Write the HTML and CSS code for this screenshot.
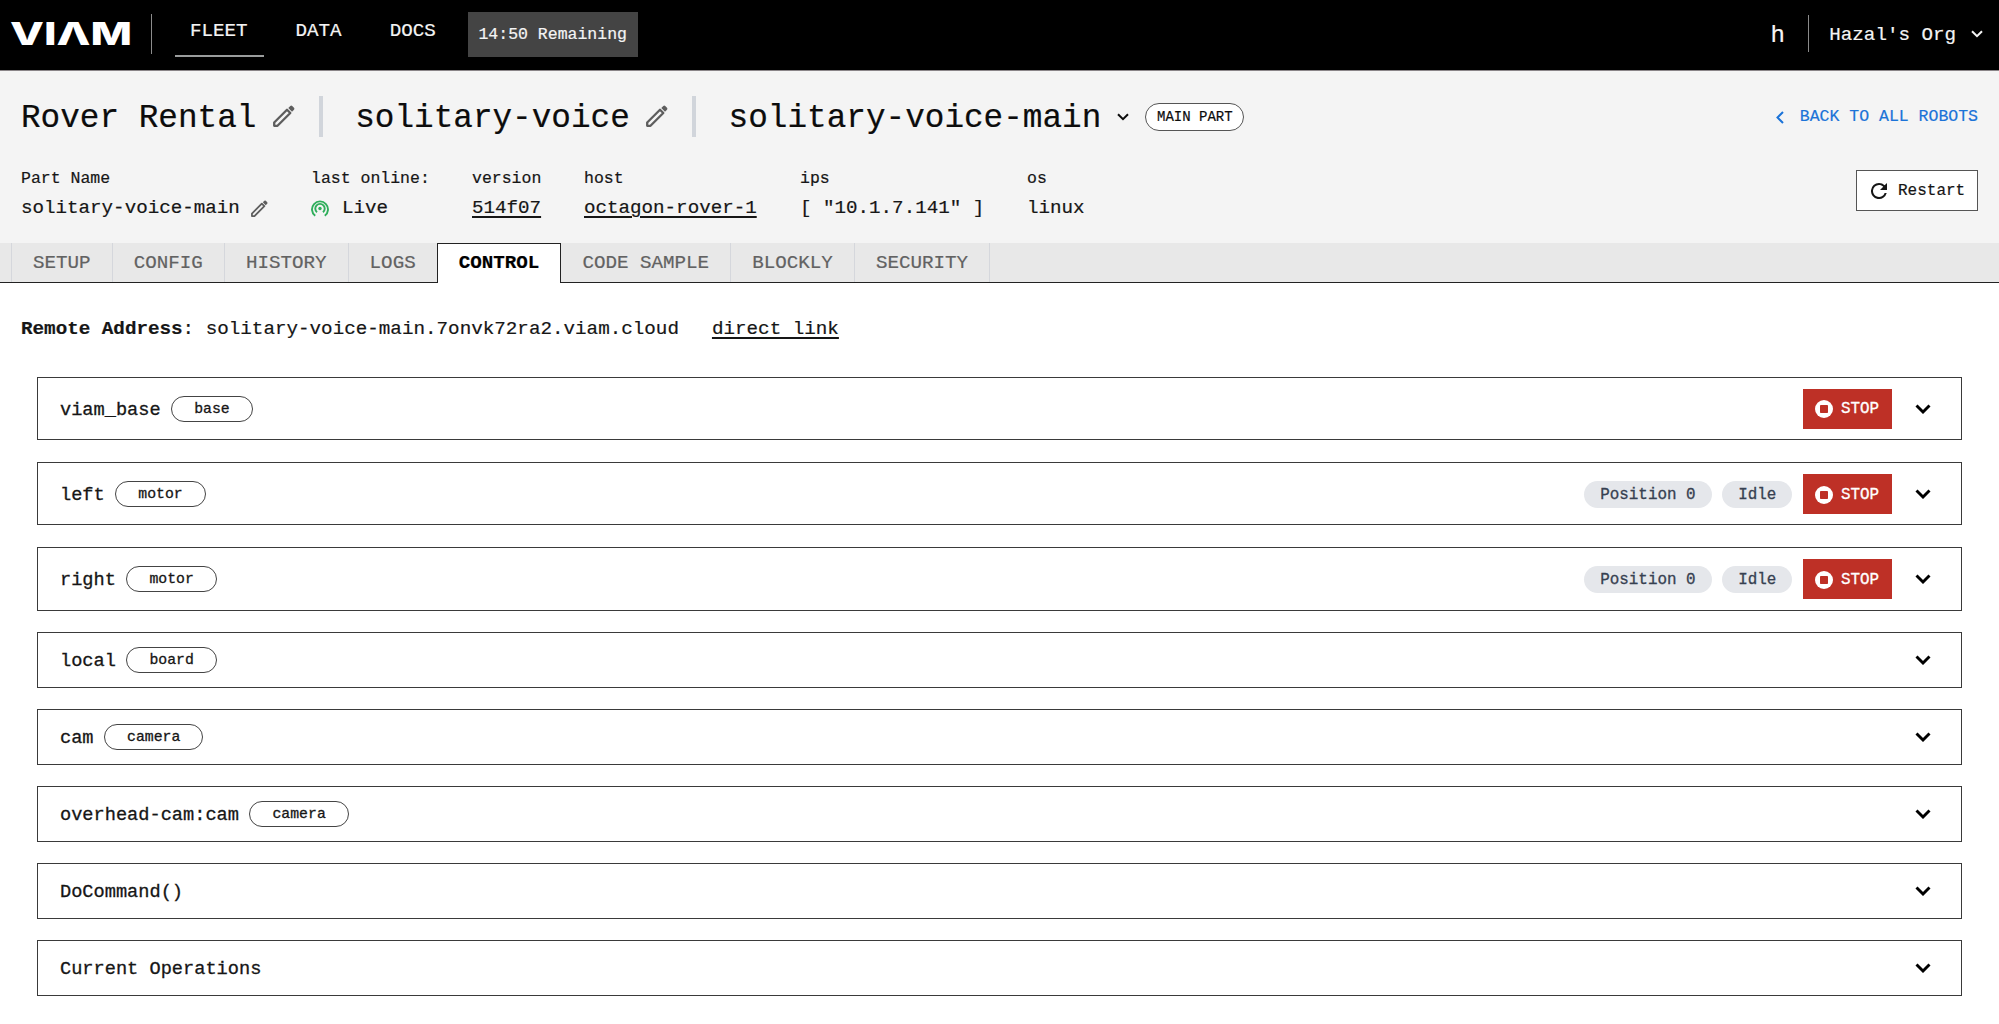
FILE: index.html
```html
<!DOCTYPE html>
<html lang="en">
<head>
<meta charset="utf-8">
<title>Viam - solitary-voice-main</title>
<link rel="stylesheet" href="styles.css">
</head>
<body>
<svg class="defs" width="0" height="0" aria-hidden="true">
  <symbol id="chev" viewBox="0 0 16 10"><path d="M1.500 1.500 8 8l6.500-6.500" fill="none" stroke="currentColor" stroke-width="2.900"/></symbol>
  <symbol id="chev-thin" viewBox="0 0 12 8"><path d="M1 1.200 6 6.200l5-5" fill="none" stroke="currentColor" stroke-width="2"/></symbol>
  <symbol id="pencil" viewBox="0 0 22 22"><path d="M1.200 20.800v-3.300L14 4.700l3.300 3.300L4.500 20.800z" fill="none" stroke="currentColor" stroke-width="2.300" stroke-linejoin="round"/><path d="M15.300 3 17.300 1q1-.9 1.900 0l1.800 1.800q.9.900 0 1.900L19 6.700z" fill="currentColor"/></symbol>
  <symbol id="stop" viewBox="0 0 18 18"><circle cx="9" cy="9" r="9" fill="#fff"/><rect x="5" y="5" width="8" height="8" rx=".8" fill="#be3026"/></symbol>
</svg>

<header class="nav">
  <svg class="logo" width="120" height="44" viewBox="0 0 120 44"><text x="-1" y="33.200" textLength="122" lengthAdjust="spacingAndGlyphs">VIΛM</text></svg>
  <span class="nav-rule"></span>
  <nav class="links">
    <a class="on">FLEET</a><a>DATA</a><a>DOCS</a>
  </nav>
  <span class="timer">14:50 Remaining</span>
  <span class="user">h</span>
  <span class="org">Hazal's Org</span>
  <svg class="org-chev" width="12" height="8"><use href="#chev-thin"/></svg>
</header>

<section class="head">
  <div class="titles">
    <h1>Rover Rental</h1>
    <svg class="edit" width="22" height="22"><use href="#pencil"/></svg>
    <i class="bar"></i>
    <h1>solitary-voice</h1>
    <svg class="edit" width="22" height="22"><use href="#pencil"/></svg>
    <i class="bar"></i>
    <h1>solitary-voice-main</h1>
    <svg class="part-chev" width="12" height="8"><use href="#chev-thin"/></svg>
    <span class="main-part">MAIN PART</span>
    <a class="back"><svg width="8" height="13" viewBox="0 0 8 13"><path d="M7 1 1.500 6.500 7 12" fill="none" stroke="currentColor" stroke-width="2"/></svg>BACK TO ALL ROBOTS</a>
  </div>
  <div class="meta">
    <dl><dt>Part Name</dt><dd>solitary-voice-main<svg class="edit-sm" width="17" height="17"><use href="#pencil"/></svg></dd></dl>
    <dl><dt>last online:</dt><dd><svg class="live" width="18" height="18" viewBox="0 0 18 18" fill="none" stroke="#2fae5b" stroke-width="1.900"><path d="M4.200 16.800A8 8 0 1 1 13.800 16.800M6 13.200a4.700 4.700 0 1 1 6 0"/><circle cx="9" cy="9.500" r="1.700" fill="#2fae5b" stroke="none"/></svg>Live</dd></dl>
    <dl><dt>version</dt><dd><u>514f07</u></dd></dl>
    <dl><dt>host</dt><dd><u>octagon-rover-1</u></dd></dl>
    <dl><dt>ips</dt><dd>[ "10.1.7.141" ]</dd></dl>
    <dl><dt>os</dt><dd>linux</dd></dl>
    <button class="restart"><svg width="16" height="16" viewBox="4 4 16 16"><path fill="currentColor" d="M17.650 6.350A7.950 7.950 0 0 0 12 4a8 8 0 1 0 7.730 10h-2.080A6 6 0 1 1 12 6c1.660 0 3.140.69 4.220 1.780L13 11h7V4z"/></svg>Restart</button>
  </div>
</section>

<nav class="tabs">
  <a>SETUP</a><a>CONFIG</a><a>HISTORY</a><a>LOGS</a><a class="active">CONTROL</a><a>CODE SAMPLE</a><a>BLOCKLY</a><a>SECURITY</a>
</nav>

<main>
  <p class="address"><b>Remote Address</b>: solitary-voice-main.7onvk72ra2.viam.cloud<u>direct link</u></p>
  <div class="cards">
    <div class="card tall"><h2>viam_base</h2><span class="pill">base</span><div class="right"><button class="stop"><svg width="18" height="18"><use href="#stop"/></svg>STOP</button><svg class="open" width="16" height="10"><use href="#chev"/></svg></div></div>
    <div class="card tall"><h2>left</h2><span class="pill">motor</span><div class="right"><span class="badge">Position 0</span><span class="badge">Idle</span><button class="stop"><svg width="18" height="18"><use href="#stop"/></svg>STOP</button><svg class="open" width="16" height="10"><use href="#chev"/></svg></div></div>
    <div class="card tall"><h2>right</h2><span class="pill">motor</span><div class="right"><span class="badge">Position 0</span><span class="badge">Idle</span><button class="stop"><svg width="18" height="18"><use href="#stop"/></svg>STOP</button><svg class="open" width="16" height="10"><use href="#chev"/></svg></div></div>
    <div class="card"><h2>local</h2><span class="pill">board</span><div class="right"><svg class="open" width="16" height="10"><use href="#chev"/></svg></div></div>
    <div class="card"><h2>cam</h2><span class="pill">camera</span><div class="right"><svg class="open" width="16" height="10"><use href="#chev"/></svg></div></div>
    <div class="card"><h2>overhead-cam:cam</h2><span class="pill">camera</span><div class="right"><svg class="open" width="16" height="10"><use href="#chev"/></svg></div></div>
    <div class="card"><h2>DoCommand()</h2><div class="right"><svg class="open" width="16" height="10"><use href="#chev"/></svg></div></div>
    <div class="card"><h2>Current Operations</h2><div class="right"><svg class="open" width="16" height="10"><use href="#chev"/></svg></div></div>
  </div>
</main>
</body>
</html>
```
FILE: styles.css
```css
* { box-sizing: border-box; }
body {
  margin: 0;
  height: 1024px;
  overflow: hidden;
  background: #fff;
  color: #161616;
  font: 19.2px/24px "Liberation Mono", monospace;
  white-space: nowrap;
  -webkit-text-stroke: .2px currentColor;
}
h1, h2, p, dl, dd { margin: 0; font-weight: 400; }
svg { display: block; flex: none; }
.defs { position: absolute; }
button { font: inherit; color: inherit; border: 0; padding: 0; }
u { text-underline-offset: 3px; text-decoration-thickness: 2px; text-decoration-skip-ink: auto; }

.nav {
  display: flex;
  align-items: flex-start;
  height: 71px;
  padding: 0 16px 0 11px;
  background: #000;
  color: #f4f4f4;
  border-bottom: 1px solid #8a8588;
}
.logo { margin-top: 12px; overflow: visible; }
.logo text { font: 800 31.5px Inter, sans-serif; fill: #fff; stroke: none; }
.nav-rule { width: 1px; height: 40px; margin: 14px 22px 0 20px; background: #8c8c8c; }
.links { display: flex; margin-top: 19px; }
.links a { height: 38px; padding: 0 16px 0 15px; margin-right: 17px; border-bottom: 2px solid transparent; }
.links a.on { border-color: #9a9c9c; margin-left: 1px; }
.timer {
  width: 170px;
  height: 45px;
  margin: 12px 0 0 -1px;
  background: #444;
  font-size: 16.5px;
  line-height: 46px;
  text-align: center;
}
.user {
  margin: 15px 0 0 auto;
  padding-right: 24px;
  height: 37px;
  border-right: 1px solid #8a8a8a;
  font: 24px/38px "Liberation Sans", sans-serif;
}
.org { margin: 23px 15px 0 20px; }
.org-chev { margin-top: 30px; }

.head { height: 172px; background: #f4f4f4; padding: 0 21px; }
.titles { display: flex; align-items: center; padding-top: 24px; height: 67px; color: #0c0c0c; }
h1 { font-size: 32.7px; line-height: 40px; padding-top: 4px; }
.edit { margin: -2px 24px 0 16.500px; color: #5e5e5e; }
.bar { width: 4px; height: 41px; background: #d1d5db; margin-right: 32.300px; }
.part-chev { margin: 0 16px 0 16px; }
.main-part {
  width: 99px;
  height: 28px;
  border: 1px solid #555;
  border-radius: 14px;
  background: #fff;
  font-size: 14px;
  line-height: 26px;
  text-align: center;
}
.back { display: flex; align-items: center; gap: 16px; margin-left: auto; padding-top: 1px; color: #1b73d8; font-size: 16.5px; }
.meta {
  display: grid;
  grid-template-columns: 290px 161px 112px 216px 227px 1fr auto;
  margin-top: 29px;
}
dt { font-size: 16.5px; }
dd { display: flex; align-items: center; margin-top: 5px; }
.edit-sm { margin-left: 11px; color: #5e5e5e; }
.live { margin-right: 13px; }
.restart {
  display: flex;
  align-items: center;
  gap: 11px;
  width: 122px;
  height: 41px;
  margin-top: 3px;
  padding: 1px 0 0 14px;
  background: #fff;
  border: 1px solid #555;
  font-size: 16px;
}

.tabs {
  display: flex;
  height: 40px;
  padding-left: 11px;
  background: #e8e8e8;
  border-bottom: 1px solid #222;
  color: #626262;
}
.tabs a { height: 39px; padding: 8px 21.050px 0; border-right: 1px solid #d5d7dc; line-height: 25px; }
.tabs a:first-child { border-left: 1px solid #d5d7dc; }
.tabs a:nth-child(4) { border-right: 0; }
.tabs .active {
  height: 40px;
  padding-top: 7px;
  background: #fff;
  border: 1px solid #222;
  border-bottom: 0;
  color: #000;
  font-weight: 700;
}

.address { padding: 34px 21px 0; height: 93.500px; font-size: 19.240px; }
.address u { margin-left: 33px; }
.cards { display: flex; flex-direction: column; gap: 21.200px; padding: 0 37px; }
.card {
  display: flex;
  align-items: center;
  height: 55.9px;
  padding: 1px 30px 0 22px;
  border: 1px solid #3a3a3a;
  -webkit-text-stroke: .3px currentColor;
}
.card.tall { height: 63.9px; }
h2 { font-size: 18.65px; line-height: 24px; padding-top: 2px; }
.pill {
  margin-left: 10.500px;
  padding: 0 22px;
  height: 26px;
  border: 1px solid #444;
  border-radius: 13px;
  font-size: 14.8px;
  line-height: 25px;
}
.right { display: flex; align-items: center; gap: 10.600px; margin-left: auto; }
.badge {
  height: 27px;
  padding: 0 16px;
  border-radius: 14px;
  background: #e5e7eb;
  color: #374151;
  font-size: 15.9px;
  line-height: 28px;
}
.stop {
  display: flex;
  align-items: center;
  gap: 8px;
  width: 89px;
  height: 40px;
  padding: 1px 0 0 12px;
  background: #be3026;
  color: #fff;
  font-size: 15.9px;
  line-height: 26px;
}
.open { margin-left: 12.500px; color: #000; }
```
